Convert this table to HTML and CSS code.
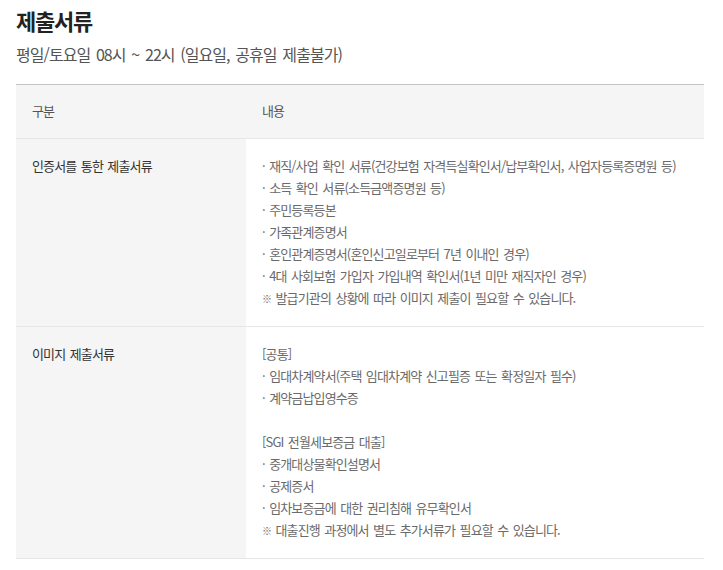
FILE: index.html
```html
<!DOCTYPE html>
<html lang="ko">
<head>
<meta charset="utf-8">
<title>제출서류</title>
<link rel="stylesheet" href="styles.css">
</head>
<body>
<div class="page">
  <h2 class="title">제출서류</h2>
  <p class="subtitle">평일/토요일 08시 ~ 22시 (일요일, 공휴일 제출불가)</p>
  <table class="docs">
    <thead>
      <tr>
        <th class="col-label">구분</th>
        <th class="col-content">내용</th>
      </tr>
    </thead>
    <tbody>
      <tr>
        <td class="col-label">인증서를 통한 제출서류</td>
        <td class="col-content">
          <p>· 재직/사업 확인 서류(건강보험 자격득실확인서/납부확인서, 사업자등록증명원 등)</p>
          <p>· 소득 확인 서류(소득금액증명원 등)</p>
          <p>· 주민등록등본</p>
          <p>· 가족관계증명서</p>
          <p>· 혼인관계증명서(혼인신고일로부터 7년 이내인 경우)</p>
          <p>· 4대 사회보험 가입자 가입내역 확인서(1년 미만 재직자인 경우)</p>
          <p><span class="note">※</span> 발급기관의 상황에 따라 이미지 제출이 필요할 수 있습니다.</p>
        </td>
      </tr>
      <tr>
        <td class="col-label">이미지 제출서류</td>
        <td class="col-content">
          <p>[공통]</p>
          <p>· 임대차계약서(주택 임대차계약 신고필증 또는 확정일자 필수)</p>
          <p>· 계약금납입영수증</p>
          <p class="gap">&nbsp;</p>
          <p>[SGI 전월세보증금 대출]</p>
          <p>· 중개대상물확인설명서</p>
          <p>· 공제증서</p>
          <p>· 임차보증금에 대한 권리침해 유무확인서</p>
          <p><span class="note">※</span> 대출진행 과정에서 별도 추가서류가 필요할 수 있습니다.</p>
        </td>
      </tr>
    </tbody>
  </table>
</div>
</body>
</html>
```

FILE: styles.css
```css
* { box-sizing: border-box; }
html, body { margin: 0; padding: 0; background: #fff; }
body {
  font-family: "Noto Sans CJK KR", "Noto Sans", sans-serif;
  color: #333;
}
.page {
  padding: 5px 19px 0 16px;
}
.title {
  margin: 0;
  font-size: 22px;
  line-height: 30px;
  font-weight: 700;
  color: #222;
  letter-spacing: -1.2px;
}
.subtitle {
  margin: 8px 0 19px;
  font-size: 16px;
  line-height: 22px;
  color: #555;
  letter-spacing: -0.95px;
  word-spacing: 2.2px;
}
.docs {
  width: 100%;
  border-collapse: collapse;
  border-top: 1px solid #c4c4c4;
  font-size: 13px;
  line-height: 22px;
  letter-spacing: -0.86px;
  word-spacing: 1.6px;
}
.docs th {
  font-weight: 400;
  text-align: left;
  background: #f5f5f5;
  color: #555;
  padding: 15px 16px 16px;
  border-bottom: 1px solid #e6e6e6;
}
.docs td {
  vertical-align: top;
  padding: 16px 16px 16px;
  border-bottom: 1px solid #e6e6e6;
}
.docs .col-label { width: 230px; }
.docs td.col-label {
  background: #f5f5f5;
  color: #333;
}
.docs td.col-content {
  background: #fff;
  color: #6a6a6a;
}
.docs p { margin: 0; white-space: nowrap; }
.note { font-size: 10px; }
```
